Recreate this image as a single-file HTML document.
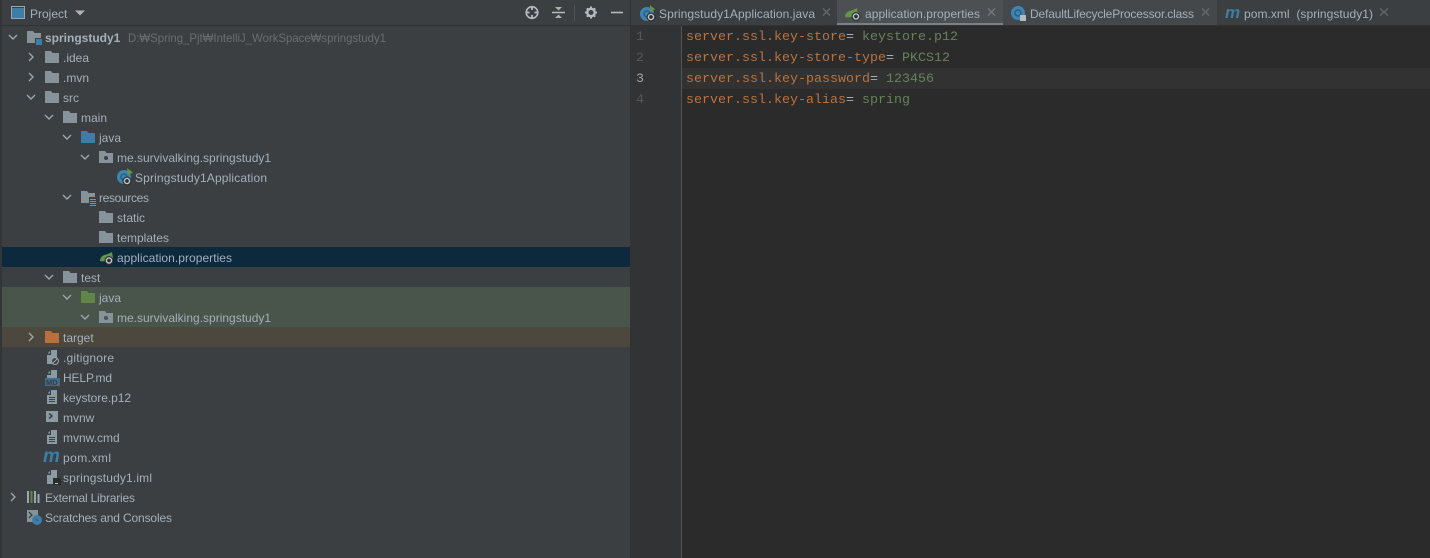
<!DOCTYPE html>
<html><head><meta charset="utf-8"><style>
html,body{margin:0;padding:0;background:#3c3f41;width:1430px;height:558px;overflow:hidden}
svg{display:block}
text{font-family:"Liberation Sans","Noto Sans CJK KR",sans-serif;font-size:12px;fill:#a4b0bb;white-space:pre}
.m{font-family:"Liberation Mono",monospace;font-size:13.33px}
.k{fill:#b87340}.v{fill:#65825a}.e{fill:#a4b0bb}.n{fill:#54585a}
</style></head><body>
<svg width="1430" height="558" viewBox="0 0 1430 558" xmlns="http://www.w3.org/2000/svg">
<defs>
<path id="cd" d="M-4 -2L0 2L4 -2" fill="none" stroke="#9aa7b0" stroke-width="1.4"/>
<path id="cr" d="M-2 -4L2 0L-2 4" fill="none" stroke="#9aa7b0" stroke-width="1.4"/>
<path id="f" d="M0 0H6L7.5 2H14V12H0Z"/>
<g id="doc"><path d="M5 0H11V14H1V5H5Z" fill="#8b9ba3"/><path d="M3 1.500H4V3.500H2Z" fill="#8b9ba3"/></g>
<g id="lines"><path d="M3 7.500H9M3 9.500H9M3 11.500H9" stroke="#3c3f41" stroke-width="1"/></g>
<g id="gear"><circle cx="0" cy="0" r="4.500" fill="#2f3234"/><circle cx="0" cy="0" r="2.600" fill="none" stroke="#c5ccd1" stroke-width="1.300"/></g>
<g id="leaf"><path d="M0 8C1 3 5 3 8 2L12 0L13 6C10 9 4 10 0 9Z" fill="#62954a"/></g>
<g id="cls"><circle cx="7" cy="7" r="7" fill="#3d85b5"/><circle cx="7" cy="7" r="3" fill="none" stroke="#2c5f80" stroke-width="1.6"/></g>
</defs>

<!-- panels -->
<rect x="0" y="0" width="1430" height="558" fill="#3c3f41"/>
<rect x="0" y="0" width="2" height="558" fill="#333537"/>
<rect x="0" y="25" width="1430" height="1" fill="#323232"/>
<rect x="2" y="247" width="628" height="20" fill="#0d293e"/>
<rect x="2" y="287" width="628" height="40" fill="#49544a"/>
<rect x="2" y="327" width="628" height="20" fill="#4d483d"/>

<!-- editor -->
<rect x="631" y="26" width="799" height="532" fill="#2b2b2b"/>
<rect x="630" y="0" width="1" height="558" fill="#323232"/>
<rect x="631" y="26" width="50" height="532" fill="#313335"/>
<rect x="681" y="26" width="1" height="532" fill="#555555"/>
<rect x="682" y="68" width="748" height="21" fill="#323232"/>

<!-- tabs -->
<rect x="837" y="0" width="166" height="25" fill="#4c5052"/>
<rect x="837" y="23" width="166" height="2" fill="#7b8185"/>
<rect x="1003" y="0" width="214" height="25" fill="#45484a"/>

<!-- header -->
<rect x="11.500" y="6.500" width="13" height="12" fill="none" stroke="#9aa7b0" stroke-width="1"/>
<rect x="12" y="8" width="12" height="10" fill="#3d7ea6"/>
<text x="30" y="18" fill="#a9b7c6">Project</text>
<path d="M75 10.500H85L80 15.500Z" fill="#afb1b3"/>

<g fill="none" stroke="#b4bcc0">
<circle cx="532" cy="12.500" r="5.800" stroke-width="1.600"/>
<path d="M532 6V10M532 15V19M525.500 12.500H529.500M534.500 12.500H538.500" stroke-width="1.800"/>
</g>
<path d="M552 12.500H565" stroke="#b4bcc0" stroke-width="1.500"/>
<path d="M555 7H562L558.500 10.500ZM555 18H562L558.500 14.500Z" fill="#a7b89d"/>
<rect x="574" y="5" width="1" height="16" fill="#515456"/>
<circle cx="591" cy="12.500" r="3.700" fill="none" stroke="#b4bcc0" stroke-width="2.400"/>
<path d="M591 6.500V8.500M591 16.500V18.500M585 12.500H587M595 12.500H597M586.800 8.300L588.200 9.700M593.800 15.300L595.200 16.700M595.200 8.300L593.800 9.700M588.200 15.300L586.800 16.700" stroke="#b4bcc0" stroke-width="2"/>
<path d="M611 12.500H623" stroke="#b4bcc0" stroke-width="1.600"/>

<!-- tab labels -->
<use href="#cls" x="640" y="7"/>
<path d="M650 5L655 9.500L650 12Z" fill="#62954a"/>
<use href="#gear" x="651" y="17"/>
<text x="659" y="18" textLength="156">Springstudy1Application.java</text>
<path d="M823 8.500L830 15.500M830 8.500L823 15.500" stroke="#63686b" stroke-width="1.300"/>

<use href="#leaf" x="845" y="8"/>
<use href="#gear" x="856" y="16.500"/>
<text x="865" y="18" textLength="115">application.properties</text>
<path d="M988 8.500L995 15.500M995 8.500L988 15.500" stroke="#737a7d" stroke-width="1.300"/>

<use href="#cls" x="1011" y="6"/>
<rect x="1020" y="15" width="6" height="6" fill="#b4bcc0"/>
<text x="1030" y="18" textLength="164">DefaultLifecycleProcessor.class</text>
<path d="M1202 8.500L1209 15.500M1209 8.500L1202 15.500" stroke="#666b6e" stroke-width="1.300"/>

<text x="1225" y="18" style="font-weight:bold;font-style:italic;font-size:17px;fill:#3d7ea6;font-family:'Liberation Sans',sans-serif">m</text>
<text x="1244" y="18" textLength="129">pom.xml  (springstudy1)</text>
<path d="M1380 8.500L1388 15.500M1388 8.500L1380 15.500" stroke="#63686b" stroke-width="1.300"/>

<!-- chevrons -->
<use href="#cd" x="13" y="37"/>
<use href="#cr" x="31" y="57"/>
<use href="#cr" x="31" y="77"/>
<use href="#cd" x="31" y="97"/>
<use href="#cd" x="49" y="117"/>
<use href="#cd" x="67" y="137"/>
<use href="#cd" x="85" y="157"/>
<use href="#cd" x="67" y="197"/>
<use href="#cd" x="49" y="277"/>
<use href="#cd" x="67" y="297"/>
<use href="#cd" x="85" y="317"/>
<use href="#cr" x="31" y="337"/>
<use href="#cr" x="13" y="497"/>

<!-- folder icons -->
<use href="#f" x="27" y="31" fill="#87939a"/>
<rect x="35" y="38" width="8" height="8" fill="#3c3f41"/>
<rect x="36" y="39" width="6" height="6" fill="#3d7ea6"/>
<use href="#f" x="45" y="51" fill="#87939a"/>
<use href="#f" x="45" y="71" fill="#87939a"/>
<use href="#f" x="45" y="91" fill="#87939a"/>
<use href="#f" x="63" y="111" fill="#87939a"/>
<use href="#f" x="81" y="131" fill="#3d7ea6"/>
<use href="#f" x="99" y="151" fill="#87939a"/>
<circle cx="106" cy="158" r="2" fill="#3c3f41"/>
<use href="#cls" x="117" y="170"/>
<path d="M127 168L133 172.500L128 175Z" fill="#62954a"/>
<use href="#gear" x="127" y="181"/>
<use href="#f" x="81" y="191" fill="#87939a"/>
<rect x="89" y="197" width="9" height="10" fill="#3c3f41"/>
<path d="M90 199.500H96M90 201.500H96M90 203.500H96M90 205.500H96" stroke="#c17d46" stroke-width="1"/>
<use href="#f" x="99" y="211" fill="#87939a"/>
<use href="#f" x="99" y="231" fill="#87939a"/>
<use href="#leaf" x="100" y="252"/>
<use href="#gear" x="109" y="260.500"/>
<use href="#f" x="63" y="271" fill="#87939a"/>
<use href="#f" x="81" y="291" fill="#62854a"/>
<use href="#f" x="99" y="311" fill="#87939a"/>
<circle cx="106" cy="318" r="2" fill="#49544a"/>
<use href="#f" x="45" y="331" fill="#b8703c"/>

<!-- files -->
<use href="#doc" x="46" y="350"/>
<circle cx="55" cy="361" r="3.500" fill="#3c3f41" stroke="#9aa7b0"/>
<path d="M52.500 363.500L57.500 358.500" stroke="#9aa7b0"/>
<use href="#doc" x="46" y="370"/>
<rect x="45" y="378" width="15" height="8" fill="#3c6d8f"/>
<text x="46" y="385" style="font-size:7.500px;font-weight:bold;fill:#3c3f41">MD</text>
<use href="#doc" x="46" y="390"/><use href="#lines" x="46" y="390"/>
<rect x="46" y="411" width="12" height="11" fill="#8b9ba3"/>
<path d="M49 413.500L52 416L49 418.500" fill="none" stroke="#3c3f41" stroke-width="1.500"/>
<use href="#doc" x="46" y="430"/><use href="#lines" x="46" y="430"/>
<text x="43" y="462" style="font-weight:bold;font-style:italic;font-size:19px;fill:#3d7ea6">m</text>
<use href="#doc" x="46" y="470"/>
<rect x="53" y="478" width="8" height="7" fill="#2b2b2b"/>
<rect x="55" y="483" width="3" height="1" fill="#c5ccd1"/>
<!-- libs -->
<path d="M28 491V503M35 491V503" stroke="#9aa7b0" stroke-width="2"/>
<path d="M31.500 491V503" stroke="#62854a" stroke-width="2"/>
<path d="M38.500 494V503" stroke="#9aa7b0" stroke-width="2"/>
<path d="M27 510H38V522H27Z" fill="#87939a"/>
<path d="M29 512L32 515L29 518" fill="none" stroke="#3c3f41" stroke-width="1.300"/>
<circle cx="37" cy="520" r="5" fill="#3d7ea6"/>
<path d="M36 519L38 521" stroke="#2b5a78"/>

<!-- tree text -->
<text x="45" y="42" style="font-weight:bold">springstudy1</text>
<text x="128" y="42" textLength="258" lengthAdjust="spacingAndGlyphs" style="fill:#6a6e71">D:₩Spring_Pjt₩IntelliJ_WorkSpace₩springstudy1</text>
<text x="63" y="62">.idea</text>
<text x="63" y="82">.mvn</text>
<text x="63" y="102">src</text>
<text x="81" y="122">main</text>
<text x="99" y="142">java</text>
<text x="117" y="162">me.survivalking.springstudy1</text>
<text x="135" y="182" textLength="132">Springstudy1Application</text>
<text x="99" y="202" textLength="50">resources</text>
<text x="117" y="222">static</text>
<text x="117" y="242">templates</text>
<text x="117" y="262" textLength="115">application.properties</text>
<text x="81" y="282">test</text>
<text x="99" y="302">java</text>
<text x="117" y="322">me.survivalking.springstudy1</text>
<text x="63" y="342">target</text>
<text x="63" y="362" textLength="51">.gitignore</text>
<text x="63" y="382" textLength="49">HELP.md</text>
<text x="63" y="402" textLength="68">keystore.p12</text>
<text x="63" y="422">mvnw</text>
<text x="63" y="442">mvnw.cmd</text>
<text x="63" y="462" textLength="48">pom.xml</text>
<text x="63" y="482" textLength="89">springstudy1.iml</text>
<text x="45" y="502" textLength="90">External Libraries</text>
<text x="45" y="522" textLength="127">Scratches and Consoles</text>

<!-- editor text -->
<text class="m n" x="636" y="40">1</text>
<text class="m n" x="636" y="61">2</text>
<text class="m" x="636" y="82" style="fill:#a4a3a3">3</text>
<text class="m n" x="636" y="103">4</text>
<text class="m" x="686" y="40"><tspan class="k">server.ssl.key-store</tspan><tspan class="e">=</tspan><tspan class="v"> keystore.p12</tspan></text>
<text class="m" x="686" y="61"><tspan class="k">server.ssl.key-store-type</tspan><tspan class="e">=</tspan><tspan class="v"> PKCS12</tspan></text>
<text class="m" x="686" y="82"><tspan class="k">server.ssl.key-password</tspan><tspan class="e">=</tspan><tspan class="v"> 123456</tspan></text>
<text class="m" x="686" y="103"><tspan class="k">server.ssl.key-alias</tspan><tspan class="e">=</tspan><tspan class="v"> spring</tspan></text>
</svg>
</body></html>
